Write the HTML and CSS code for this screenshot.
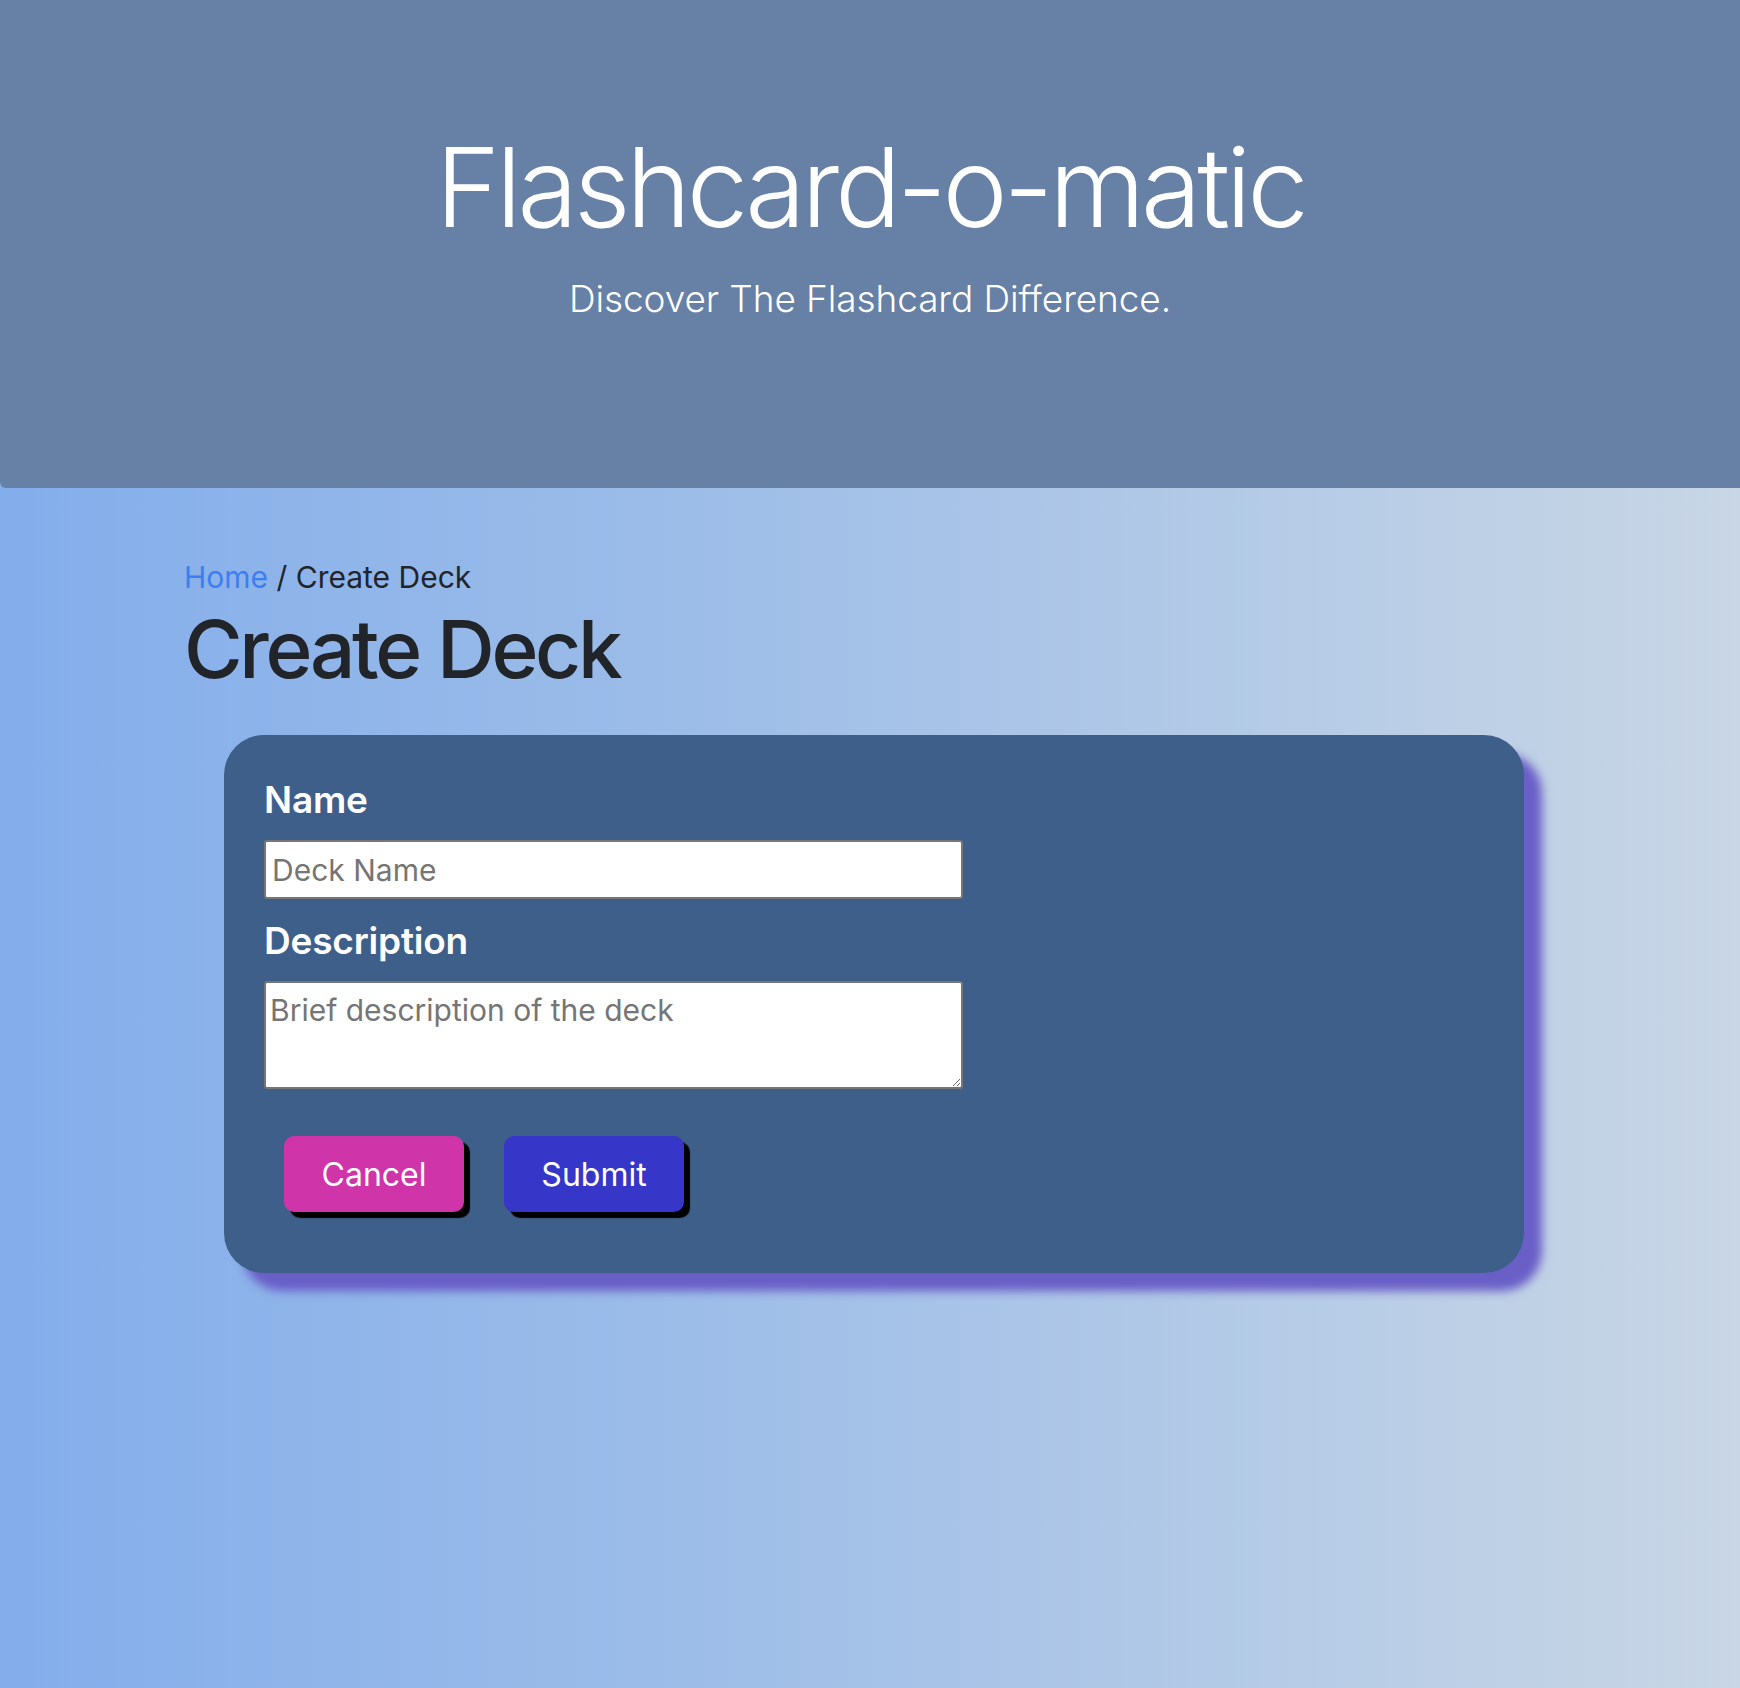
FILE: index.html
```html
<!DOCTYPE html>
<html lang="en">
<head>
<meta charset="utf-8">
<title>Flashcard-o-matic</title>
<link rel="stylesheet" href="styles.css">
</head>
<body>
<header class="hero">
  <h1 class="hero-title">Flashcard-o-matic</h1>
  <p class="hero-lead">Discover The Flashcard Difference.</p>
</header>
<main class="container">
  <nav class="crumbs"><a class="crumb-link" href="#">Home</a> / Create Deck</nav>
  <h2 class="page-title">Create Deck</h2>
  <form class="deck-card">
    <label class="field-label" for="name">Name</label>
    <input class="field-input" id="name" type="text" placeholder="Deck Name">
    <label class="field-label" for="desc">Description</label>
    <textarea class="field-area" id="desc" placeholder="Brief description of the deck"></textarea>
    <div class="actions">
      <button type="button" class="btn btn-cancel">Cancel</button>
      <button type="submit" class="btn btn-submit">Submit</button>
    </div>
  </form>
</main>
</body>
</html>
```

FILE: styles.css
```css
* { box-sizing: border-box; }
html, body { margin: 0; padding: 0; }
body {
  min-height: 1688px;
  font-family: Inter, "Noto Sans", sans-serif;
  color: #212529;
  background: linear-gradient(to right, #83adeb 0%, #9dbde8 40%, #c8d6e5 100%);
}
.hero {
  height: 488px;
  padding-top: 121px;
  background: #6780a5;
  color: #fff;
  text-align: center;
  border-bottom-left-radius: 6px;
}
.hero-title {
  margin: 0;
  font-size: 110px;
  line-height: 132px;
  font-weight: 300;
  letter-spacing: -4.2px;
}
.hero-lead {
  margin: 18px 0 0;
  font-size: 37px;
  line-height: 55px;
  font-weight: 300;
  letter-spacing: -0.1px;
}
.container {
  padding: 67px 184px 0 184px;
}
.crumbs {
  font-size: 30px;
  line-height: 45px;
  color: #212529;
}
.crumb-link {
  color: #3d7ff0;
  text-decoration: none;
}
.page-title {
  margin: 1px 0 0;
  font-size: 80px;
  line-height: 96px;
  font-weight: 500;
  letter-spacing: -3.3px;
}
.deck-card {
  margin: 38px 0 0 40px;
  width: 1300px;
  padding: 43px 40px 61px;
  background: #3f5f8b;
  border-radius: 40px;
  box-shadow: 18px 18px 10px #6a5fc7;
  display: flex;
  flex-direction: column;
  align-items: flex-start;
}
.field-label {
  color: #fff;
  font-size: 37px;
  line-height: 44px;
  font-weight: 600;
  letter-spacing: -0.2px;
  margin-bottom: 18px;
}
.field-input, .field-area {
  width: 699px;
  background: #fff;
  border: 2px solid #767676;
  border-radius: 3px;
  font-family: Inter, "Noto Sans", sans-serif;
  font-size: 30px;
  color: #212529;
}
.field-input {
  height: 59px;
  padding: 0 6px;
  margin-bottom: 20px;
}
.field-area {
  height: 108px;
  padding: 9px 4px 9px;
  resize: vertical;
  line-height: 36px;
}
.field-input::placeholder, .field-area::placeholder {
  color: #757575;
}
.actions {
  display: flex;
  gap: 40px;
  margin: 47px 0 0 20px;
}
.btn {
  width: 180px;
  height: 76px;
  border: 0;
  border-radius: 10px;
  color: #fff;
  font-family: Inter, "Noto Sans", sans-serif;
  font-size: 32px;
  font-weight: 400;
  box-shadow: 6px 6px 1px #000;
  cursor: pointer;
}
.btn-cancel { background: #cf34a9; }
.btn-submit { background: #3636c8; }
```
